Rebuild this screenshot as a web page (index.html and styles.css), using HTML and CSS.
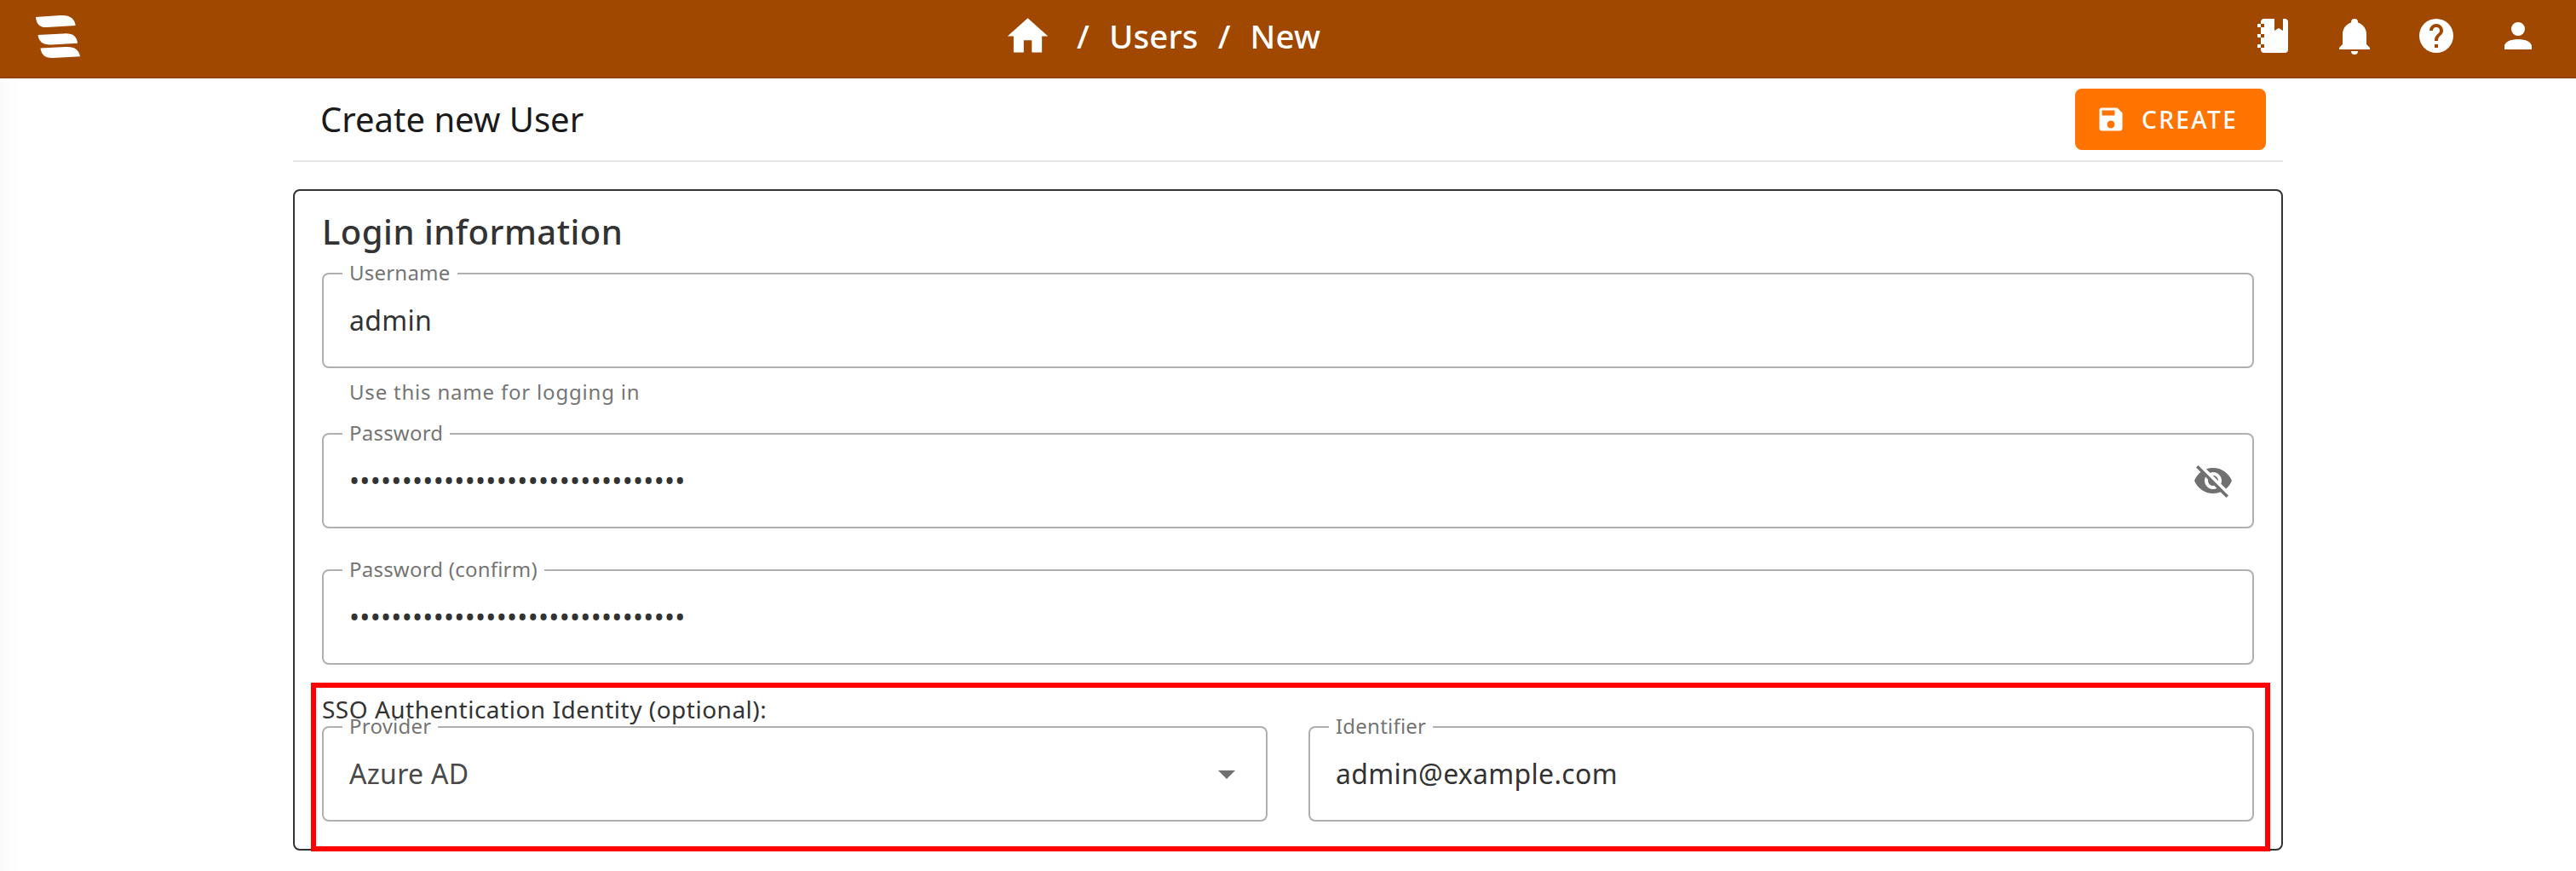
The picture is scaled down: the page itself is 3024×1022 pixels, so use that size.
FILE: index.html
```html
<!DOCTYPE html>
<html lang="en">
<head>
<meta charset="utf-8">
<title>Create new User</title>
<link rel="stylesheet" href="styles.css">
</head>
<body>
<header class="topbar">
  <a class="logo"><svg width="56" height="56" viewBox="0 0 56 56" fill="#fff"><path d="M2 6L31 4Q47 3 48.700 16L15 18Q3 19 2 6ZM4.500 27L34 25.500Q50 24 51 36.800L20 38.500Q6 39 4.500 27ZM7.500 42.500L37 41Q52 40 54 52.300L22 54Q9 54.500 7.500 42.500Z"/></svg></a>
  <nav class="crumbs">
    <svg class="home" width="57" height="57" viewBox="0 0 24 24" fill="#fff"><path d="M10 20v-6h4v6h5v-8h3L12 3 2 12h3v8z"/></svg>
    <span class="slash">/</span><span class="crumb users">Users</span><span class="slash">/</span><span class="crumb">New</span>
  </nav>
  <div class="actions">
    <svg width="48" height="48" viewBox="0 0 24 24" fill="#fff"><path d="M3 7V5h2V4a2 2 0 0 1 2-2h6v7l2.500-1.500L18 9V2h1a2 2 0 0 1 2 2v16a2 2 0 0 1-2 2H7a2 2 0 0 1-2-2v-1H3v-2h2v-4H3v-2h2V7H3m2 0h2V5H5v2m0 12h2v-2H5v2m0-6h2v-2H5v2z"/></svg>
    <svg width="48" height="48" viewBox="0 0 24 24" fill="#fff"><path d="M21 19v1H3v-1l2-2v-6c0-3.100 2.030-5.830 5-6.710V4a2 2 0 0 1 4 0v.29c2.970.88 5 3.610 5 6.710v6l2 2m-7 2a2 2 0 0 1-4 0"/></svg>
    <svg width="48" height="48" viewBox="0 0 24 24" fill="#fff"><path d="M15.070 11.250l-.9.920C13.450 12.890 13 13.500 13 15h-2v-.5c0-1.110.45-2.110 1.170-2.830l1.240-1.260c.37-.36.59-.86.59-1.410a2 2 0 0 0-2-2 2 2 0 0 0-2 2H8a4 4 0 0 1 4-4 4 4 0 0 1 4 4c0 .88-.36 1.670-.93 2.250M13 19h-2v-2h2M12 2A10 10 0 0 0 2 12a10 10 0 0 0 10 10 10 10 0 0 0 10-10A10 10 0 0 0 12 2z"/></svg>
    <svg width="48" height="48" viewBox="0 0 24 24" fill="#fff"><path d="M12 4a4 4 0 1 1 0 8 4 4 0 0 1 0-8m0 10c4.420 0 8 1.790 8 4v2H4v-2c0-2.210 3.580-4 8-4z"/></svg>
  </div>
</header>
<main class="page">
  <div class="titlebar">
    <h1 class="title">Create new User</h1>
    <button class="create"><svg width="36" height="36" viewBox="0 0 24 24" fill="#fff"><path d="M15 9H5V5h10m-3 14a3 3 0 1 1 0-6 3 3 0 0 1 0 6m5-16H5a2 2 0 0 0-2 2v14a2 2 0 0 0 2 2h14a2 2 0 0 0 2-2V7z"/></svg><span>CREATE</span></button>
  </div>
  <section class="card">
    <h2 class="section-title">Login information</h2>
    <fieldset class="field"><legend>Username</legend><span class="value">admin</span></fieldset>
    <p class="helper">Use this name for logging in</p>
    <fieldset class="field"><legend>Password</legend><span class="value dots">••••••••••••••••••••••••••••••••</span><svg class="eye" width="48" height="48" viewBox="0 0 24 24" fill="#707070"><path d="M12 7c2.760 0 5 2.240 5 5 0 .65-.13 1.260-.36 1.830l2.920 2.920c1.510-1.260 2.700-2.890 3.430-4.750-1.730-4.390-6-7.500-11-7.500-1.400 0-2.740.25-3.980.7l2.160 2.160C10.740 7.130 11.350 7 12 7zM2 4.270l2.280 2.280.46.460C3.080 8.300 1.780 10.020 1 12c1.730 4.390 6 7.500 11 7.500 1.550 0 3.030-.3 4.380-.84l.42.42L19.730 22 21 20.730 3.270 3 2 4.270zM7.530 9.800l1.550 1.550c-.05.21-.08.430-.08.650 0 1.660 1.340 3 3 3 .22 0 .44-.03.650-.08l1.550 1.550c-.67.330-1.410.530-2.200.530-2.760 0-5-2.240-5-5 0-.79.200-1.530.530-2.200zm4.310-.78l3.150 3.150.02-.16c0-1.660-1.340-3-3-3l-.17.010z"/></svg></fieldset>
    <fieldset class="field confirm"><legend>Password (confirm)</legend><span class="value dots">••••••••••••••••••••••••••••••••</span></fieldset>
    <div class="sso">
      <p class="sso-title">SSO Authentication Identity (optional):</p>
      <div class="pair">
        <fieldset class="field"><legend>Provider</legend><span class="value select">Azure AD</span><svg class="caret" width="48" height="48" viewBox="0 0 24 24" fill="#707070"><path d="M7 10l5 5 5-5z"/></svg></fieldset>
        <fieldset class="field"><legend>Identifier</legend><span class="value">admin@example.com</span></fieldset>
      </div>
    </div>
  </section>
</main>
</body>
</html>
```
FILE: styles.css
```css
* { box-sizing: border-box; }
body { margin: 0; height: 1022px; overflow: hidden; color: #333; font-family: "Noto Sans", sans-serif; background: linear-gradient(90deg, #fafafa, #fff 24px); }
svg { display: block; flex: none; }
h1, h2, p { margin: 0; }

.topbar { height: 92px; display: grid; grid-template-columns: 1178px auto 1fr; background: #a04700; border-bottom: 2px solid #934108; }
.logo { padding: 14px 0 0 40px; }
.crumbs { display: flex; align-items: center; padding-bottom: 6px; font-size: 38.4px; font-weight: 500; line-height: 56px; letter-spacing: .15px; color: #fff; }
.home { margin-right: 29px; }
.slash { margin-right: 23px; }
.users { margin-right: 23px; }
.actions { display: flex; justify-content: flex-end; gap: 48px; padding: 18px 44px 0 0; }

.page { width: 2336px; margin: 0 auto; }
.titlebar { height: 98px; display: flex; justify-content: space-between; align-items: center; padding: 0 20px 0 32px; border-bottom: 2px solid #e5e5e5; }
.title { margin-bottom: 2px; font-size: 40px; font-weight: 400; color: #1a1a1a; }
.create { width: 224px; height: 72px; display: flex; align-items: center; gap: 18px; padding: 0 0 0 24px; border: 0; border-radius: 8px; background: #ff7300; color: #fff; font: 500 28px/40px "Noto Sans", sans-serif; letter-spacing: 2.4px; }

.card { height: 776px; margin-top: 32px; border: 2px solid #333; border-radius: 8px; padding: 18px 32px 0; }
.section-title { height: 64px; font-size: 40px; font-weight: 500; line-height: 59px; letter-spacing: .5px; }
.field { flex: 1; display: flex; align-items: center; min-width: 0; height: 126px; margin: 0; padding: 0 22px 15px 30px; border: 2px solid #b0b0b0; border-radius: 8px; }
.field legend { height: 30px; margin-left: -8px; padding: 0 8px; color: #757575; font-size: 24px; line-height: 27px; letter-spacing: .22px; }
.value { font-size: 32px; line-height: 44px; letter-spacing: .3px; }
.select { color: #4a4a4a; }
.dots { white-space: nowrap; }
.helper { height: 62px; padding: 6px 32px 0; color: #757575; font-size: 24px; line-height: 43px; letter-spacing: .8px; }
.eye { margin-left: auto; }
.caret { margin-left: auto; }
.confirm { margin-top: 34px; }
.sso { height: 198px; margin: 21px -19px 0 -13px; padding: 5px 13px 0 7px; border: 6px solid #f00; }
.sso-title { height: 26px; font-size: 28px; line-height: 40px; letter-spacing: .5px; }
.pair { display: flex; gap: 48px; }
```
